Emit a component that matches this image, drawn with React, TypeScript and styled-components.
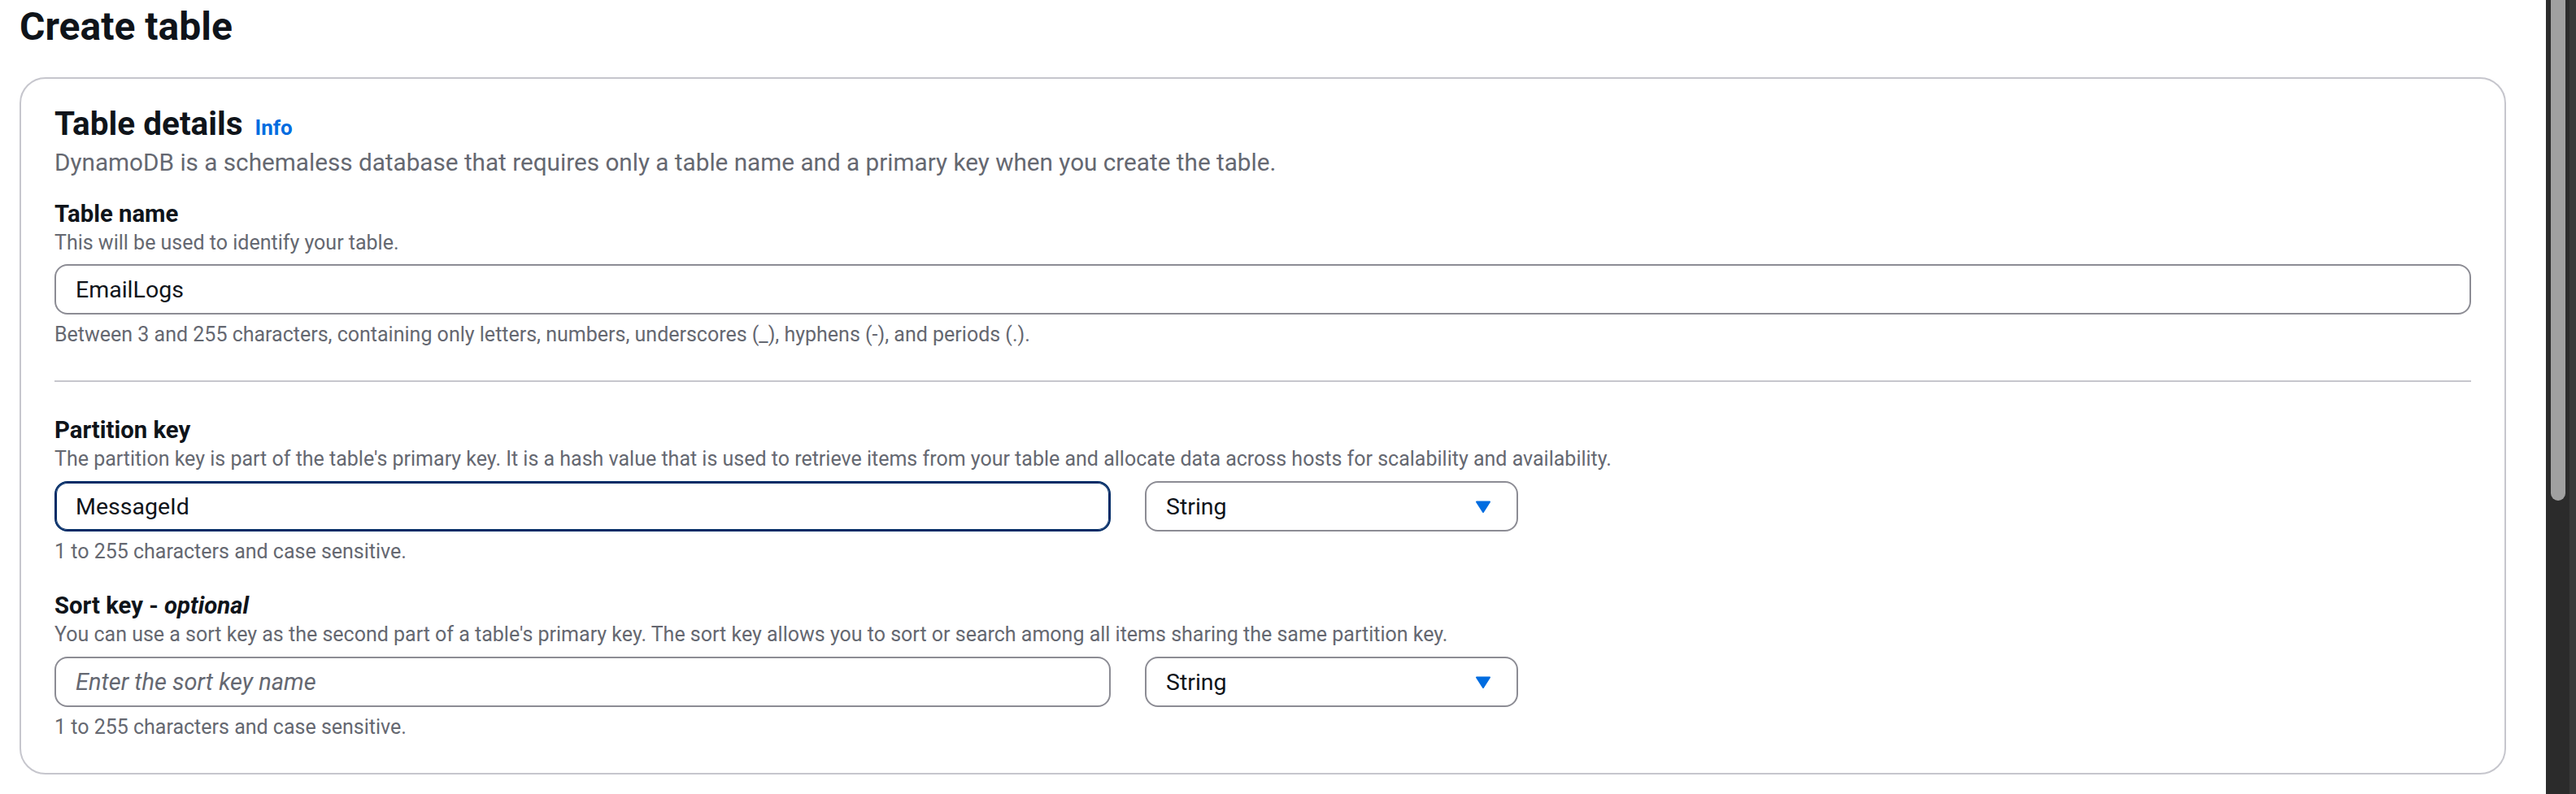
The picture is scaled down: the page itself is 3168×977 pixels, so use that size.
import React from "react";
import styled, { createGlobalStyle } from "styled-components";

const GlobalStyle = createGlobalStyle`
  html, body {
    margin: 0;
    padding: 0;
    background: #ffffff;
  }
  body {
    font-family: Roboto, "Noto Sans", "Liberation Sans", sans-serif;
    color: #0f141a;
  }
  * { box-sizing: border-box; }
`;

const Page = styled.div`
  display: flex;
  height: 100vh;
  overflow: hidden;
`;

const Main = styled.main`
  flex: 1;
  padding: 3px 49px 0 24px;
`;

const Title = styled.h1`
  margin: 0 0 32px;
  font-size: 48px;
  line-height: 60px;
  font-weight: 700;
  color: #0f141a;
`;

const Card = styled.section`
  border: 2px solid #c6c6cd;
  border-radius: 32px;
  padding: 31px 41px 40px;
  background: #ffffff;
`;

const Header = styled.div`
  display: flex;
  align-items: baseline;
  gap: 15px;
`;

const H2 = styled.h2`
  margin: 0;
  font-size: 40.5px;
  line-height: 48px;
  font-weight: 700;
  color: #0f141a;
`;

const InfoLink = styled.a`
  font-size: 26px;
  font-weight: 700;
  color: #006ce0;
  text-decoration: none;
  cursor: pointer;
`;

const Description = styled.p`
  margin: 4px 0 0;
  font-size: 29.7px;
  line-height: 40px;
  color: #656871;
`;

const Field = styled.div<{ $top: number }>`
  margin-top: ${(p) => p.$top}px;
`;

const Label = styled.div`
  font-size: 29.3px;
  line-height: 40px;
  font-weight: 700;
  color: #0f141a;

  em {
    font-style: italic;
  }
`;

const Hint = styled.div<{ $top?: number }>`
  margin-top: ${(p) => p.$top ?? 0}px;
  font-size: 25px;
  line-height: 32px;
  color: #656871;
`;

const ControlRow = styled.div<{ $top: number }>`
  margin-top: ${(p) => p.$top}px;
  display: flex;
  gap: 42px;
`;

const Input = styled.input<{ $width?: number; $focused?: boolean }>`
  display: block;
  width: ${(p) => (p.$width ? `${p.$width}px` : "100%")};
  height: 62px;
  padding: 0 24px;
  border: 2px solid ${(p) => (p.$focused ? "#002b66" : "#8c8c94")};
  box-shadow: ${(p) => (p.$focused ? "inset 0 0 0 1px #002b66" : "none")};
  border-radius: 16px;
  background: #ffffff;
  font-family: Roboto, "Noto Sans", "Liberation Sans", sans-serif;
  font-size: 28.5px;
  color: #0f141a;
  outline: none;

  &::placeholder {
    color: #656871;
    font-style: italic;
    font-size: 29px;
  }
`;

const Select = styled.div`
  width: 459px;
  height: 62px;
  display: flex;
  align-items: center;
  justify-content: space-between;
  padding: 0 31px 0 24px;
  border: 2px solid #8c8c94;
  border-radius: 16px;
  background: #ffffff;
  font-size: 28.5px;
  color: #0f141a;
  cursor: pointer;
`;

const Divider = styled.hr`
  margin: 40px 0 0;
  border: 0;
  height: 2px;
  background: #c6c6cd;
`;

const ScrollTrack = styled.div`
  width: 37px;
  height: 100%;
  display: flex;
  align-items: flex-start;
  background: #2b2b2b;
`;

const ScrollThumb = styled.div`
  width: 18px;
  height: 616px;
  margin-left: 6px;
  background: #a0a0a0;
  border-radius: 0 0 9px 9px;
`;

const ScrollEdge = styled.div`
  width: 8px;
  align-self: stretch;
  margin-left: auto;
  background: #3a3a3a;
`;

const Caret = () => (
  <svg width="20" height="17" viewBox="0 0 20 17" aria-hidden="true">
    <path d="M2 2.5 H18 L10 15 Z" fill="#006ce0" stroke="#006ce0" strokeWidth="2" strokeLinejoin="round" />
  </svg>
);

const TypeSelect = () => (
  <Select>
    <span>String</span>
    <Caret />
  </Select>
);

export default function App() {
  return (
    <>
      <GlobalStyle />
      <Page>
        <Main>
          <Title>Create table</Title>
          <Card>
            <Header>
              <H2>Table details</H2>
              <InfoLink>Info</InfoLink>
            </Header>
            <Description>
              DynamoDB is a schemaless database that requires only a table name and a primary key when you create the table.
            </Description>

            <Field $top={23}>
              <Label>Table name</Label>
              <Hint>This will be used to identify your table.</Hint>
              <ControlRow $top={10}>
                <Input defaultValue="EmailLogs" readOnly />
              </ControlRow>
              <Hint $top={9}>
                Between 3 and 255 characters, containing only letters, numbers, underscores (_), hyphens (-), and periods (.).
              </Hint>
            </Field>

            <Divider />

            <Field $top={39}>
              <Label>Partition key</Label>
              <Hint>
                The partition key is part of the table's primary key. It is a hash value that is used to retrieve items from your table and allocate data across hosts for scalability and availability.
              </Hint>
              <ControlRow $top={11}>
                <Input $width={1299} $focused defaultValue="MessageId" readOnly />
                <TypeSelect />
              </ControlRow>
              <Hint $top={9}>1 to 255 characters and case sensitive.</Hint>
            </Field>

            <Field $top={30}>
              <Label>
                Sort key - <em>optional</em>
              </Label>
              <Hint>
                You can use a sort key as the second part of a table's primary key. The sort key allows you to sort or search among all items sharing the same partition key.
              </Hint>
              <ControlRow $top={11}>
                <Input $width={1299} placeholder="Enter the sort key name" readOnly />
                <TypeSelect />
              </ControlRow>
              <Hint $top={9}>1 to 255 characters and case sensitive.</Hint>
            </Field>
          </Card>
        </Main>
        <ScrollTrack>
          <ScrollThumb />
          <ScrollEdge />
        </ScrollTrack>
      </Page>
    </>
  );
}
